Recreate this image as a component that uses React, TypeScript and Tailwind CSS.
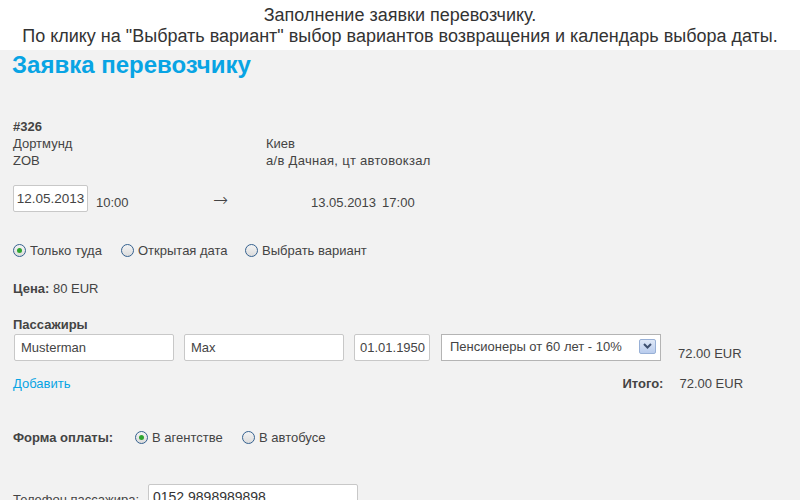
import React from "react";

const font = { fontFamily: '"Liberation Sans", Arial, sans-serif' };

function Radio({ checked }: { checked?: boolean }) {
  return (
    <span className="inline-flex h-[13px] w-[13px] items-center justify-center rounded-full border border-[#35618f] bg-gradient-to-b from-[#f4f4f4] to-[#dcdcdc] shrink-0">
      {checked && <span className="h-[5px] w-[5px] rounded-full bg-[#2fa52f]" />}
    </span>
  );
}

function RadioLabel({ checked, label, w }: { checked?: boolean; label: string; w: string }) {
  return (
    <span className={`flex items-center ${w}`}>
      <Radio checked={checked} />
      <span className="ml-[4px]">{label}</span>
    </span>
  );
}

export default function App() {
  return (
    <div className="min-h-[500px] w-[800px] overflow-hidden text-[13px] text-[#444]" style={font}>
      <div className="h-[50px] bg-white pt-[5px] text-center text-[18px] leading-[21px] text-[#333]">
        <div>Заполнение заявки перевозчику.</div>
        <div>По клику на "Выбрать вариант" выбор вариантов возвращения и календарь выбора даты.</div>
      </div>
      <div className="h-[450px] bg-[#f2f2f2] pl-[13px]">
        <div className="-ml-[1px] text-[24px] font-bold leading-[30px] text-[#08a4e4]">Заявка перевозчику</div>

        <div className="mt-[38px] grid grid-cols-[253px_1fr] leading-[17px]">
          <div className="font-bold">#326</div>
          <div />
          <div>Дортмунд</div>
          <div>Киев</div>
          <div>ZOB</div>
          <div className="tracking-[0.3px]">а/в Дачная, цт автовокзал</div>
        </div>

        <div className="mt-[16px] flex h-[27px] items-center">
          <div className="flex h-[27px] w-[75px] items-center justify-center rounded-[2px] border border-[#c8c8c8] bg-white pt-[2px] text-[13.5px] text-[#444]">
            12.05.2013
          </div>
          <span className="ml-[8px] w-[117px] pt-[8px] leading-[17px]">10:00</span>
          <span className="w-[98px] pt-[3px] text-[18px] leading-[20px]" style={{ fontFamily: '"DejaVu Sans", sans-serif', fontWeight: 300 }}>→</span>
          <span className="pt-[8px] leading-[17px]">13.05.2013</span>
          <span className="ml-[6px] pt-[8px] leading-[17px]">17:00</span>
        </div>

        <div className="mt-[30px] flex items-center leading-[17px]">
          <RadioLabel checked label="Только туда" w="w-[108px]" />
          <RadioLabel label="Открытая дата" w="w-[124px]" />
          <RadioLabel label="Выбрать вариант" w="" />
        </div>

        <div className="mt-[21px] leading-[17px]">
          <span className="font-bold">Цена:</span> 80 EUR
        </div>

        <div className="mt-[19px] font-bold leading-[17px]">Пассажиры</div>

        <div className="mt-[1px] flex items-start">
          <div className="ml-[1px] flex h-[27px] w-[160px] items-center rounded-[2px] border border-[#c8c8c8] bg-white pl-[6px] pt-[1px] text-[#444]">Musterman</div>
          <div className="ml-[10px] flex h-[27px] w-[160px] items-center rounded-[2px] border border-[#c8c8c8] bg-white pl-[6px] pt-[1px] text-[#444]">Max</div>
          <div className="ml-[10px] flex h-[27px] w-[76px] items-center rounded-[2px] border border-[#c8c8c8] bg-white pl-[5px] pt-[1px] text-[#444]">01.01.1950</div>
          <div className="ml-[11px] flex h-[27px] w-[220px] items-center justify-between border border-[#b4b4b4] bg-white pl-[8px] pr-[4px] text-[#444]">
            <span className="-mt-[2px]">Пенсионеры от 60 лет - 10%</span>
            <span className="mb-[3px] flex h-[15px] w-[17px] items-center justify-center rounded-[2px] border border-[#98b0d6] bg-gradient-to-b from-[#dfe8f7] to-[#b9cced]">
              <svg width="9" height="6" viewBox="0 0 9 6">
                <path d="M1 1 L4.5 4.5 L8 1" fill="none" stroke="#3e5070" strokeWidth="2" />
              </svg>
            </span>
          </div>
          <span className="ml-[17px] mt-[11px] leading-[17px]">72.00 EUR</span>
        </div>

        <div className="mt-[13px] flex leading-[17px]">
          <a className="text-[#08a4e4]">Добавить</a>
          <span className="ml-[552px] w-[57px] font-bold">Итого:</span>
          <span>72.00 EUR</span>
        </div>

        <div className="mt-[37px] flex items-center leading-[17px]">
          <span className="w-[122px] font-bold">Форма оплаты:</span>
          <RadioLabel checked label="В агентстве" w="w-[107px]" />
          <RadioLabel label="В автобусе" w="" />
        </div>

        <div className="mt-[38px] flex items-start">
          <span className="mt-[7px] w-[135px] leading-[17px]">Телефон пассажира:</span>
          <div className="flex h-[27px] w-[210px] items-center rounded-[2px] border border-[#c8c8c8] bg-white pl-[4px] text-[14px] text-[#333]">0152 9898989898</div>
        </div>
      </div>
    </div>
  );
}
